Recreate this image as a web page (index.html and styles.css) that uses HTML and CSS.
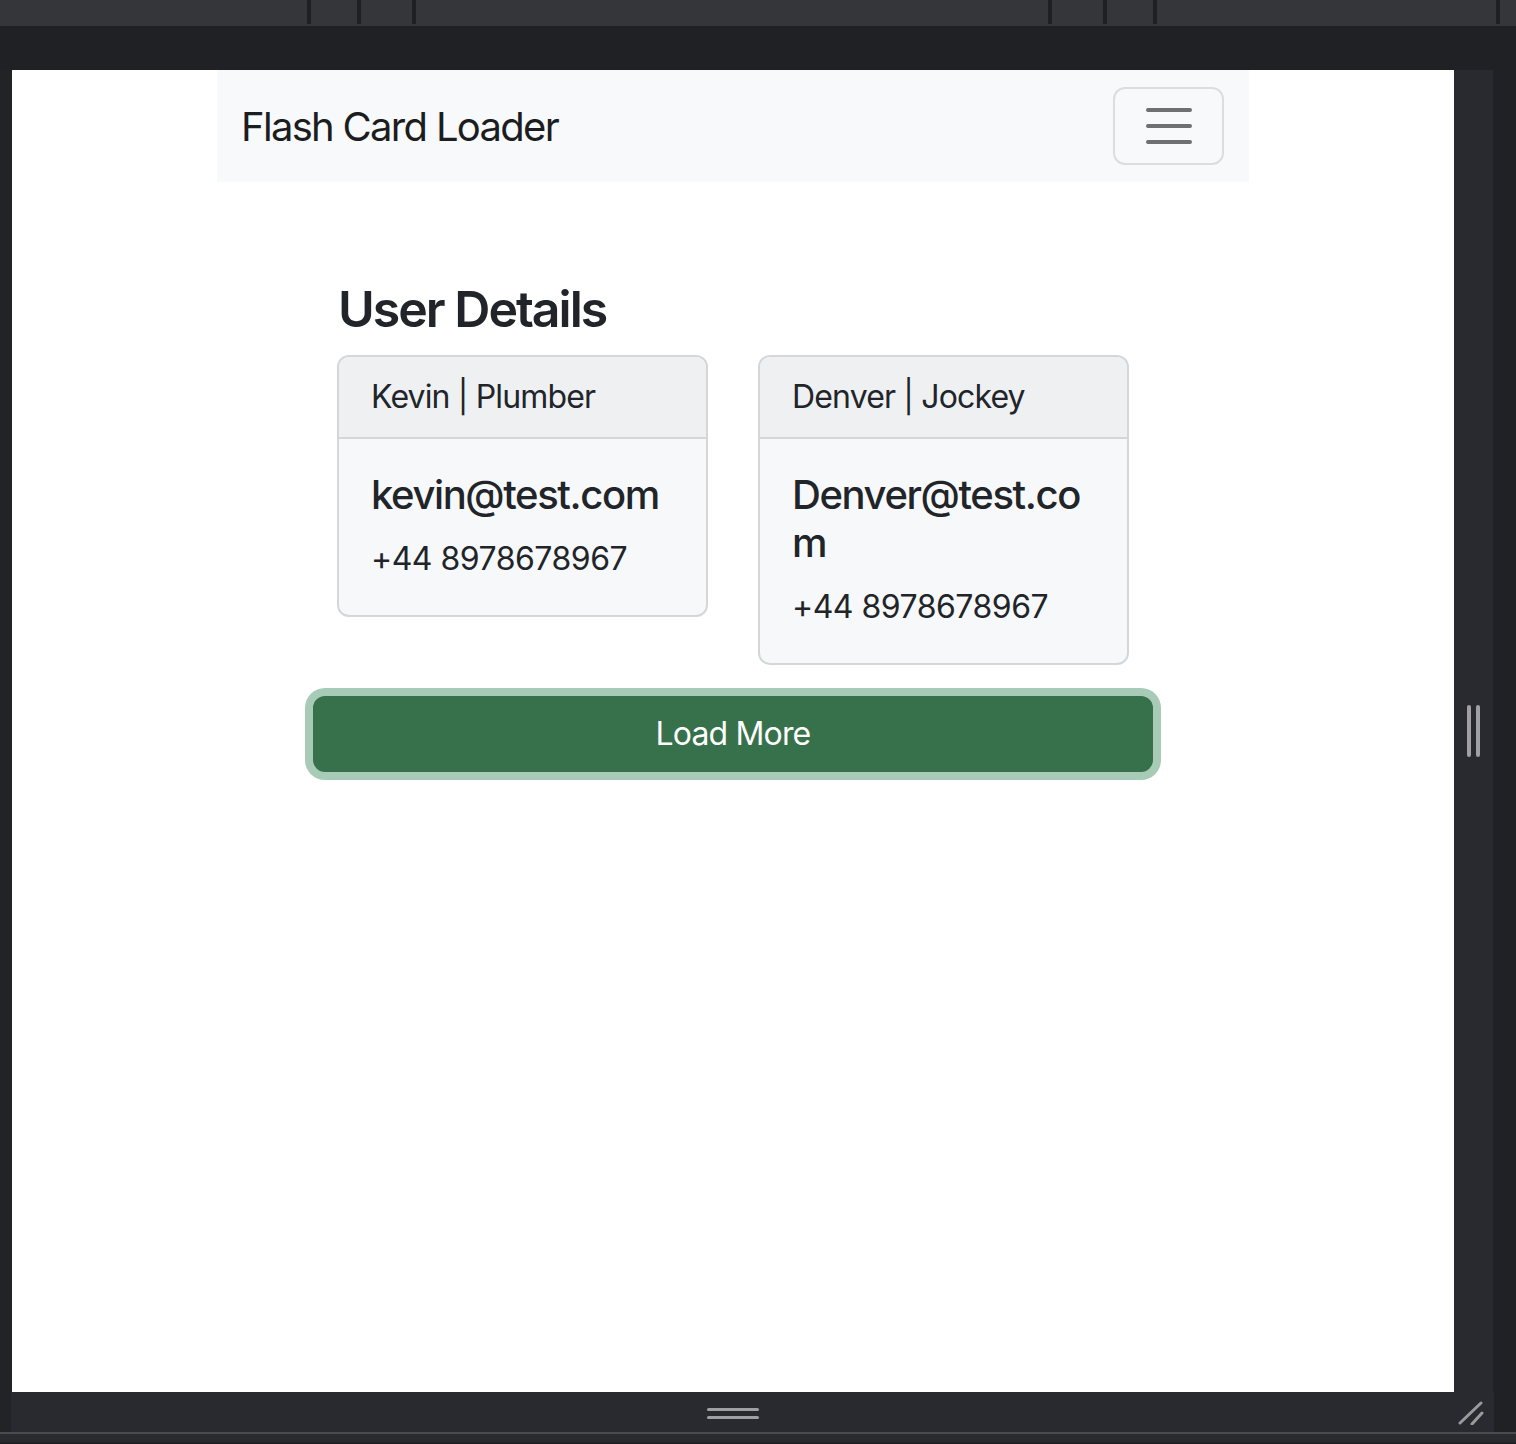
FILE: index.html
```html
<!DOCTYPE html>
<html lang="en">
<head>
<meta charset="utf-8">
<title>Flash Card Loader</title>
<link rel="stylesheet" href="styles.css">
</head>
<body>
<div class="chrome-top">
  <span class="seg w307"></span><span class="divider"></span>
  <span class="seg w46"></span><span class="divider"></span>
  <span class="seg w51"></span><span class="divider"></span>
  <span class="seg w632"></span><span class="divider"></span>
  <span class="seg w51"></span><span class="divider"></span>
  <span class="seg w46"></span><span class="divider"></span>
  <span class="seg w339"></span><span class="divider"></span>
  <span class="seg grow"></span>
</div>
<div class="chrome-gap"></div>
<div class="frame-mid">
  <div class="gutter-left"></div>
  <div class="page">
    <div class="container">
      <nav class="navbar">
        <span class="brand">Flash Card Loader</span>
        <button class="toggler" type="button" aria-label="Toggle navigation">
          <svg width="60" height="60" viewBox="0 0 60 60" aria-hidden="true">
            <path d="M9 14h42M9 30h42M9 46h42" stroke="#6f7072" stroke-width="4" stroke-linecap="round" fill="none"/>
          </svg>
        </button>
      </nav>
      <main class="main">
        <div class="inner">
          <h3 class="title">User Details</h3>
          <div class="cards">
            <div class="card">
              <div class="card-header">Kevin | Plumber</div>
              <div class="card-body">
                <h5 class="card-title">kevin@test.com</h5>
                <p class="card-text">+44 8978678967</p>
              </div>
            </div>
            <div class="card">
              <div class="card-header">Denver | Jockey</div>
              <div class="card-body">
                <h5 class="card-title">Denver@test.com</h5>
                <p class="card-text">+44 8978678967</p>
              </div>
            </div>
          </div>
        </div>
        <button class="btn-load" type="button">Load More</button>
      </main>
    </div>
  </div>
  <div class="side-strip">
    <span class="vbar"></span><span class="vbar"></span>
  </div>
  <div class="gutter-right"></div>
</div>
<div class="frame-bottom">
  <div class="gutter-bl"></div>
  <div class="bottom-strip">
    <div class="hhandle"><span class="hbar"></span><span class="hbar"></span></div>
    <svg class="resize" width="26" height="24" viewBox="0 0 26 24" aria-hidden="true">
      <path d="M23 2L2 22M24 12L14 23" stroke="#9a9a9c" stroke-width="3" stroke-linecap="round" fill="none"/>
    </svg>
  </div>
  <div class="gutter-br"></div>
</div>
<div class="frame-line"></div>
<div class="frame-foot"></div>
</body>
</html>
```
FILE: styles.css
```css
* { box-sizing: border-box; }
html, body { margin: 0; padding: 0; }
body {
  background: #202124;
  width: 1516px;
  height: 1444px;
  overflow: hidden;
  font-family: "Inter", "Noto Sans", sans-serif;
  color: #212529;
}

/* browser chrome */
.chrome-top {
  display: flex;
  align-items: flex-start;
  height: 26px;
  background: #35363a;
}
.seg { display: block; height: 24px; }
.w307 { width: 307px; }
.w46 { width: 46px; }
.w51 { width: 51px; }
.w632 { width: 632px; }
.w339 { width: 339px; }
.grow { flex: 1; }
.divider { display: block; width: 4px; height: 24px; background: #1f2023; }
.chrome-gap { height: 44px; background: #202124; }

.frame-mid { display: flex; height: 1322px; }
.gutter-left { width: 12px; background: #222326; }
.page { width: 1442px; background: #ffffff; }
.side-strip {
  width: 39px;
  background: #292a2f;
  display: flex;
  align-items: center;
  padding-left: 13px;
  gap: 5px;
}
.vbar { display: block; width: 4px; height: 52px; border-radius: 2px; background: #a0a0a2; }
.gutter-right { flex: 1; background: #202124; }

.frame-bottom { display: flex; height: 40px; }
.gutter-bl { width: 11px; background: #222326; }
.bottom-strip {
  width: 1483px;
  background: #292a2f;
  display: flex;
  align-items: center;
  padding-left: 696px;
}
.hhandle { display: flex; flex-direction: column; gap: 5px; padding-top: 2px; }
.hbar { display: block; width: 52px; height: 3px; border-radius: 2px; background: #a0a0a2; }
.resize { margin-left: 699px; margin-top: 2px; }
.gutter-br { flex: 1; background: #202124; }
.frame-line { height: 2px; background: #4a4b4f; }
.frame-foot { height: 8px; background: #2a2b2f; }

/* page content */
.container {
  width: 1080px;
  margin: 0 auto;
  padding: 0 24px;
}
.navbar {
  background: #f8f9fa;
  height: 112px;
  padding: 0 25px 0 24px;
  display: flex;
  align-items: center;
  justify-content: space-between;
}
.brand {
  font-size: 40px;
  line-height: 60px;
  color: #1c1d1e;
  letter-spacing: -1.7px;
  margin-top: 2px;
}
.toggler {
  width: 111px;
  height: 78px;
  padding: 0;
  border: 2px solid #dcdddf;
  border-radius: 12px;
  background: transparent;
  display: flex;
  align-items: center;
  justify-content: center;
}
.toggler svg { display: block; }

.main {
  width: 840px;
  margin: 97px auto 0;
}
.inner { padding: 0 24px 0 24px; }
.title {
  margin: 0 0 16px;
  padding-left: 1px;
  font-size: 50px;
  line-height: 60px;
  font-weight: 600;
  letter-spacing: -2px;
}
.cards {
  display: flex;
  align-items: flex-start;
  gap: 50px;
  margin-bottom: 31px;
}
.card {
  width: 371px;
  border: 2px solid #d5d6d8;
  border-radius: 12px;
  background: #f7f8f9;
  overflow: hidden;
  overflow-wrap: break-word;
}
.card-header {
  background: #eff0f2;
  border-bottom: 2px solid #d5d6d8;
  padding: 16px 32px;
  font-size: 32px;
  line-height: 48px;
  letter-spacing: -0.85px;
}
.card-body { padding: 32px 32px 32px; }
.card-title {
  margin: 0 0 16px;
  font-size: 40px;
  line-height: 48px;
  font-weight: 500;
  letter-spacing: -1.4px;
}
.card-text {
  margin: 0;
  font-size: 32px;
  line-height: 48px;
  letter-spacing: -0.5px;
}
.btn-load {
  display: block;
  width: 840px;
  height: 76px;
  margin: 0 auto;
  border: 2px solid #36714b;
  border-radius: 12px;
  background: #36714b;
  color: #ffffff;
  font-family: "Inter", "Noto Sans", sans-serif;
  font-size: 32px;
  line-height: 48px;
  box-shadow: 0 0 0 8px #a8cbb8;
  letter-spacing: -0.85px;
}
```
